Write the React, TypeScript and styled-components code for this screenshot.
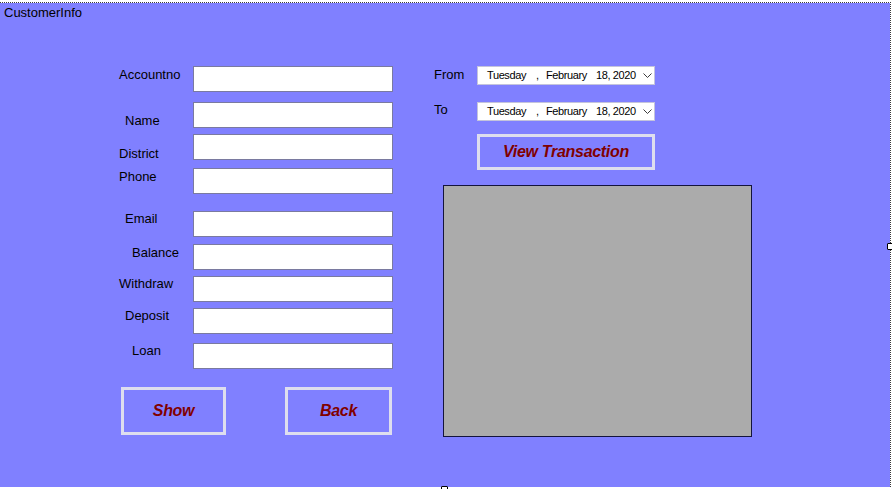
import React from 'react';
import styled, { createGlobalStyle } from 'styled-components';

type FieldDef = {
  label: string;
  gap: number; // space above the textbox, px
  dx: number; // label indent
  dy: number; // label drop from textbox top
};

const fields: FieldDef[] = [
  { label: 'Accountno', gap: 0, dx: 0, dy: 1 },
  { label: 'Name', gap: 10, dx: 6, dy: 11 },
  { label: 'District', gap: 6, dx: 0, dy: 12 },
  { label: 'Phone', gap: 7, dx: 0, dy: 1 },
  { label: 'Email', gap: 17, dx: 6, dy: 0 },
  { label: 'Balance', gap: 7, dx: 13, dy: 1 },
  { label: 'Withdraw', gap: 6, dx: 0, dy: 0 },
  { label: 'Deposit', gap: 6, dx: 6, dy: 0 },
  { label: 'Loan', gap: 9, dx: 13, dy: 0 },
];

const Chevron: React.FC = () => (
  <svg width="9" height="5" viewBox="0 0 9 5">
    <polyline points="0.5,0.5 4.5,4.5 8.5,0.5" fill="none" stroke="#3c3c3c" strokeWidth="1" />
  </svg>
);

const DatePicker: React.FC = () => (
  <PickerBox>
    <Seg $w={49}>Tuesday</Seg>
    <Seg $w={10}>,</Seg>
    <Seg $w={50}>February</Seg>
    <Seg $w={47}>18, 2020</Seg>
    <Chevron />
  </PickerBox>
);

const App: React.FC = () => {
  return (
    <Page>
      <GlobalStyle />
      <Frame>
        <Form>
          <Title>CustomerInfo</Title>
          <Body>
            <LeftColumn>
              {fields.map((f) => (
                <FieldRow key={f.label} $gap={f.gap}>
                  <FieldLabel $dx={f.dx} $dy={f.dy}>
                    {f.label}
                  </FieldLabel>
                  <TextBox type="text" readOnly />
                </FieldRow>
              ))}
              <ButtonRow>
                <FormButton $w={105}>Show</FormButton>
                <FormButton $w={107}>Back</FormButton>
              </ButtonRow>
            </LeftColumn>

            <RightColumn>
              <DateRow>
                <DateLabel $dy={1}>From</DateLabel>
                <DatePicker />
              </DateRow>
              <DateRow $gap={17}>
                <DateLabel $dy={0}>To</DateLabel>
                <DatePicker />
              </DateRow>
              <ViewButton>View Transaction</ViewButton>
              <GridPanel />
            </RightColumn>
          </Body>
        </Form>
      </Frame>
      <Handle style={{ left: 887, top: 243 }} />
      <Handle style={{ left: 441, top: 486 }} />
    </Page>
  );
};

export default App;

const GlobalStyle = createGlobalStyle`
  html, body {
    margin: 0;
    padding: 0;
    background: #fff;
  }
  body {
    font-family: 'Liberation Sans', Arial, sans-serif;
  }
  * {
    box-sizing: border-box;
  }
`;

const Page = styled.div`
  position: relative;
  width: 892px;
  height: 489px;
  overflow: hidden;
  background: #fff;
  padding-top: 2px;
`;

const Frame = styled.div`
  width: 891px;
  border-top: 1px dotted #3a3a3a;
  border-right: 1px dotted #3a3a3a;
`;

const Form = styled.div`
  width: 890px;
  height: 484px;
  background: #8080ff;
  display: flex;
  flex-direction: column;
`;

const Title = styled.div`
  padding: 2px 0 0 4px;
  font-size: 13px;
  line-height: 15px;
  color: #000;
`;

const Body = styled.div`
  display: flex;
  margin-top: 46px;
  padding-left: 119px;
  gap: 41px;
`;

const LeftColumn = styled.div`
  display: flex;
  flex-direction: column;
  width: 274px;
`;

const FieldRow = styled.div<{ $gap: number }>`
  display: grid;
  grid-template-columns: 74px 200px;
  align-items: start;
  margin-top: ${(p) => p.$gap}px;
`;

const FieldLabel = styled.span<{ $dx: number; $dy: number }>`
  padding-left: ${(p) => p.$dx}px;
  margin-top: ${(p) => p.$dy}px;
  font-size: 13px;
  line-height: 15px;
  color: #000;
  white-space: nowrap;
`;

const TextBox = styled.input`
  width: 200px;
  height: 26px;
  margin: 0;
  padding: 0 3px;
  background: #fff;
  border: 1px solid #7a7aa0;
  outline: none;
  font-family: 'Liberation Sans', Arial, sans-serif;
  font-size: 13px;
`;

const ButtonRow = styled.div`
  display: flex;
  gap: 59px;
  margin-top: 18px;
  padding-left: 2px;
`;

const FormButton = styled.button<{ $w: number }>`
  width: ${(p) => p.$w}px;
  height: 48px;
  margin: 0;
  padding: 0;
  background: #8080ff;
  border: 3px solid #dedeee;
  color: #800000;
  font-family: 'Liberation Sans', Arial, sans-serif;
  font-size: 16px;
  font-weight: bold;
  font-style: italic;
  letter-spacing: -0.3px;
  cursor: pointer;
`;

const RightColumn = styled.div`
  display: flex;
  flex-direction: column;
  align-items: flex-start;
`;

const DateRow = styled.div<{ $gap?: number }>`
  display: flex;
  align-items: flex-start;
  margin-top: ${(p) => p.$gap ?? 0}px;
`;

const DateLabel = styled.span<{ $dy: number }>`
  width: 43px;
  margin-top: ${(p) => p.$dy}px;
  font-size: 13px;
  line-height: 15px;
  color: #000;
`;

const PickerBox = styled.div`
  display: flex;
  align-items: center;
  width: 178px;
  height: 19px;
  padding-left: 9px;
  background: #fff;
  border: 1px solid #c4c4dc;
  font-size: 11px;
  letter-spacing: -0.4px;
  color: #000;
`;

const Seg = styled.span<{ $w: number }>`
  width: ${(p) => p.$w}px;
  white-space: nowrap;
  line-height: 17px;
`;

const ViewButton = styled.button`
  width: 178px;
  height: 36px;
  margin: 13px 0 0 43px;
  padding: 0;
  background: #8080ff;
  border: 3px solid #dedeee;
  color: #800000;
  font-family: 'Liberation Sans', Arial, sans-serif;
  font-size: 16px;
  font-weight: bold;
  font-style: italic;
  letter-spacing: -0.3px;
  cursor: pointer;
`;

const GridPanel = styled.div`
  width: 309px;
  height: 252px;
  margin: 15px 0 0 9px;
  background: #ababab;
  border: 1px solid #14143c;
`;

const Handle = styled.div`
  position: absolute;
  width: 7px;
  height: 7px;
  background: #fff;
  border: 1px solid #000;
  border-radius: 1px;
`;
